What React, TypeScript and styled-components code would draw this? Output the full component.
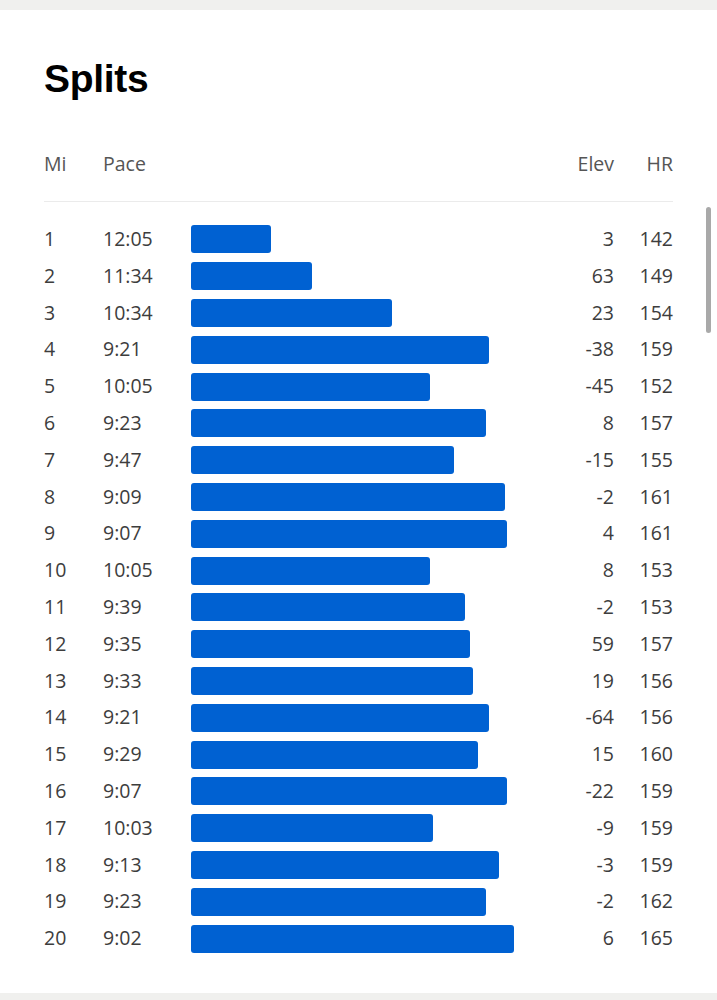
import { Fragment } from 'react';
import styled, { createGlobalStyle } from 'styled-components';

const GlobalStyle = createGlobalStyle`
  html, body {
    margin: 0;
    padding: 0;
    background: #f0f0ee;
  }
  body {
    font-family: "Open Sans", "Liberation Sans", sans-serif;
  }
`;

const splits = [
  { mi: 1, pace: '12:05', elev: 3, hr: 142 },
  { mi: 2, pace: '11:34', elev: 63, hr: 149 },
  { mi: 3, pace: '10:34', elev: 23, hr: 154 },
  { mi: 4, pace: '9:21', elev: -38, hr: 159 },
  { mi: 5, pace: '10:05', elev: -45, hr: 152 },
  { mi: 6, pace: '9:23', elev: 8, hr: 157 },
  { mi: 7, pace: '9:47', elev: -15, hr: 155 },
  { mi: 8, pace: '9:09', elev: -2, hr: 161 },
  { mi: 9, pace: '9:07', elev: 4, hr: 161 },
  { mi: 10, pace: '10:05', elev: 8, hr: 153 },
  { mi: 11, pace: '9:39', elev: -2, hr: 153 },
  { mi: 12, pace: '9:35', elev: 59, hr: 157 },
  { mi: 13, pace: '9:33', elev: 19, hr: 156 },
  { mi: 14, pace: '9:21', elev: -64, hr: 156 },
  { mi: 15, pace: '9:29', elev: 15, hr: 160 },
  { mi: 16, pace: '9:07', elev: -22, hr: 159 },
  { mi: 17, pace: '10:03', elev: -9, hr: 159 },
  { mi: 18, pace: '9:13', elev: -3, hr: 159 },
  { mi: 19, pace: '9:23', elev: -2, hr: 162 },
  { mi: 20, pace: '9:02', elev: 6, hr: 165 },
];

const toSeconds = (pace: string) => {
  const [m, s] = pace.split(':').map(Number);
  return m * 60 + s;
};

// faster pace -> longer bar
const barWidth = (pace: string) => 323 - (toSeconds(pace) - 542) * 1.328;

const Card = styled.section`
  position: relative;
  margin-top: 10px;
  background: #fff;
  padding: 45px 44px 36px 44px;
  height: 983px;
  box-sizing: border-box;
`;

const Title = styled.h2`
  margin: 0;
  font-family: "Liberation Sans", Arial, sans-serif;
  font-weight: 700;
  font-size: 39px;
  line-height: 48px;
  letter-spacing: -0.3px;
  color: #000;
`;

const Grid = styled.div`
  display: grid;
  grid-template-columns: 59px 88px 1fr 62px 59px;
  margin-top: 47px;
`;

const HeadCell = styled.div<{ $right?: boolean }>`
  font-size: 19.5px;
  line-height: 28px;
  color: #555;
  padding-bottom: 23px;
  border-bottom: 1px solid #ebebeb;
  margin-bottom: 19px;
  text-align: ${(p) => (p.$right ? 'right' : 'left')};
`;

const Cell = styled.div<{ $right?: boolean }>`
  font-size: 19.5px;
  height: 36.8px;
  line-height: 36.8px;
  color: #3d3d3d;
  text-align: ${(p) => (p.$right ? 'right' : 'left')};
  white-space: nowrap;
`;

const BarCell = styled.div`
  height: 36.8px;
  display: flex;
  align-items: center;
`;

const Bar = styled.div`
  height: 28px;
  background: #0061d2;
  border-radius: 3px;
`;

const Scrollbar = styled.div`
  position: absolute;
  right: 6px;
  top: 197px;
  width: 5px;
  height: 126px;
  border-radius: 3px;
  background: #a9a9a9;
`;

export default function App() {
  return (
    <>
      <GlobalStyle />
      <Card>
        <Title>Splits</Title>
        <Grid>
          <HeadCell>Mi</HeadCell>
          <HeadCell>Pace</HeadCell>
          <HeadCell />
          <HeadCell $right>Elev</HeadCell>
          <HeadCell $right>HR</HeadCell>
          {splits.map((s) => (
            <Fragment key={s.mi}>
              <Cell>{s.mi}</Cell>
              <Cell>{s.pace}</Cell>
              <BarCell>
                <Bar style={{ width: `${barWidth(s.pace)}px` }} />
              </BarCell>
              <Cell $right>{s.elev}</Cell>
              <Cell $right>{s.hr}</Cell>
            </Fragment>
          ))}
        </Grid>
        <Scrollbar />
      </Card>
    </>
  );
}
